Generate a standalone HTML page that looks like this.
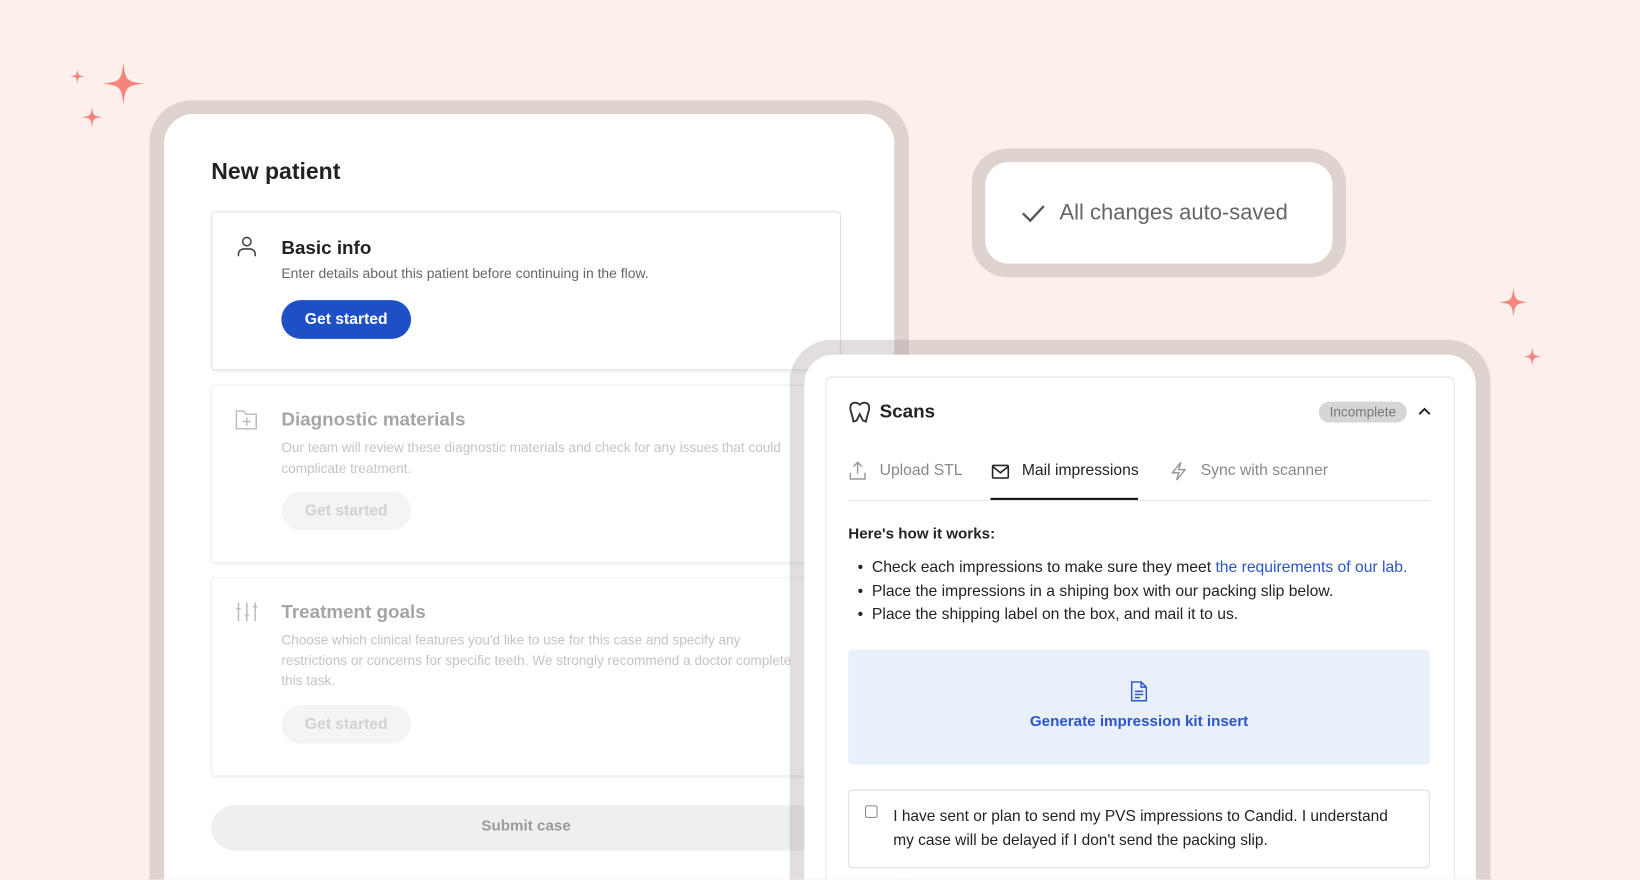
<!DOCTYPE html>
<html><head><meta charset="utf-8"><style>
*{box-sizing:border-box;margin:0;padding:0}
html,body{width:1640px;height:880px;overflow:hidden;background:#fdefec;font-family:"Liberation Sans",sans-serif}
#w{position:absolute;left:0;top:0;width:1640px;height:880px;overflow:hidden}
#s{position:absolute;left:0;top:0;width:1568px;height:841px;overflow:hidden;transform:scale(1.04592);transform-origin:0 0}
.a{position:absolute}
.frame{position:absolute;border-radius:40px 40px 0 0;background:rgba(156,146,143,0.3)}
.white{position:absolute;background:#fff}
.card{position:absolute;background:#fff;border:1px solid #e2e2e2;border-radius:4px;box-shadow:0 1px 3px rgba(0,0,0,.08)}
.t{position:absolute;white-space:nowrap}
.btn{position:absolute;border-radius:20px;font-weight:bold;font-size:15px;text-align:center;line-height:37px;width:124px;height:37px}
svg{position:absolute;overflow:visible}
</style></head><body><div id="w"><div id="s">
<svg width="0" height="0"><defs><path id="sp" d="M0,-1 C0.1,-0.15 0.15,-0.1 1,0 C0.15,0.1 0.1,0.15 0,1 C-0.1,0.15 -0.15,0.1 -1,0 C-0.15,-0.1 -0.1,-0.15 0,-1Z" fill="#f4857d"/></defs></svg>
<svg style="left:118px;top:80px"><use href="#sp" transform="scale(20)"/></svg>
<svg style="left:74px;top:73px"><use href="#sp" transform="scale(7)"/></svg>
<svg style="left:88px;top:112px"><use href="#sp" transform="scale(10)"/></svg>
<svg style="left:1447px;top:289px"><use href="#sp" transform="scale(14)"/></svg>
<svg style="left:1465px;top:341px"><use href="#sp" transform="scale(9)"/></svg>

<div class="frame" style="left:143px;top:96px;width:726px;height:745px"></div>
<div class="white" style="left:157px;top:109px;width:698px;height:732px;border-radius:28px 28px 0 0"></div>
<div class="t" style="left:202px;top:151px;font-size:22px;font-weight:bold;color:#222">New patient</div>

<div class="card" style="left:202px;top:202px;width:602px;height:152px"></div>
<svg style="left:227px;top:226px" width="18" height="20" viewBox="0 0 18 20" fill="none" stroke="#444" stroke-width="1.5"><circle cx="9" cy="5" r="4"/><path d="M1 19v-2a5 5 0 0 1 5-5h6a5 5 0 0 1 5 5v2"/></svg>
<div class="t" style="left:269px;top:227px;font-size:18px;font-weight:bold;color:#222">Basic info</div>
<div class="t" style="left:269px;top:254px;font-size:13.3px;color:#666">Enter details about this patient before continuing in the flow.</div>
<div class="btn" style="left:269px;top:287px;background:#1f4fc4;color:#fff">Get started</div>

<div class="card" style="left:202px;top:368px;width:600px;height:170px;border-color:#f3f3f3"></div>
<svg style="left:225px;top:391px" width="22" height="20" viewBox="0 0 22 20" fill="none" stroke="#bbb" stroke-width="1.4"><path d="M1 2h7l2 3h10v14H1z"/><path d="M11 8v8M7 12h8"/></svg>
<div class="t" style="left:269px;top:391px;font-size:18px;font-weight:bold;color:#a5a5a5">Diagnostic materials</div>
<div class="t" style="left:269px;top:418px;font-size:13px;color:#c4c4c4;line-height:20px">Our team will review these diagnostic materials and check for any issues that could<br>complicate treatment.</div>
<div class="btn" style="left:269px;top:470px;background:#f4f4f4;color:#d2d2d2">Get started</div>

<div class="card" style="left:202px;top:552px;width:600px;height:190px;border-color:#f3f3f3"></div>
<svg style="left:225px;top:575px" width="22" height="20" viewBox="0 0 22 20" fill="none" stroke="#bbb" stroke-width="1.4"><path d="M3 1v18M11 1v18M19 1v18M1 7h4M9 13h4M17 5h4"/></svg>
<div class="t" style="left:269px;top:575px;font-size:18px;font-weight:bold;color:#a5a5a5">Treatment goals</div>
<div class="t" style="left:269px;top:602px;font-size:13px;color:#c4c4c4;line-height:19.5px">Choose which clinical features you'd like to use for this case and specify any<br>restrictions or concerns for specific teeth. We strongly recommend a doctor complete<br>this task.</div>
<div class="btn" style="left:269px;top:674px;background:#f4f4f4;color:#d2d2d2">Get started</div>

<div class="a" style="left:202px;top:770px;width:600px;height:43px;border-radius:22px;background:#efefef"></div>
<div class="t" style="left:202px;top:782px;width:602px;text-align:center;font-size:14.5px;font-weight:bold;color:#9a9a9a">Submit case</div>

<div class="frame" style="left:929px;top:142px;width:358px;height:123px;border-radius:34px"></div>
<div class="white" style="left:942px;top:155px;width:332px;height:97px;border-radius:22px"></div>
<svg style="left:977px;top:195px" width="22" height="18" viewBox="0 0 22 18" fill="none" stroke="#555" stroke-width="2.2"><path d="M1 9l7 7L21 2"/></svg>
<div class="t" style="left:1013px;top:192px;font-size:21px;color:#666">All changes auto-saved</div>

<div class="frame" style="left:755px;top:325px;width:670px;height:516px"></div>
<div class="white" style="left:769px;top:339px;width:642px;height:502px;border-radius:28px 28px 0 0"></div>
<div class="card" style="left:789px;top:360px;width:602px;height:481px;box-shadow:none;border-radius:6px 6px 0 0;border-bottom:none"></div>
<svg style="left:811px;top:383px" width="22" height="22" viewBox="0 0 22 22" fill="none" stroke="#333" stroke-width="1.8"><path d="M11 4C8 1 2 1 2 7c0 4 2 6 3 13l3-1 3-6 3 6 3 1c1-7 3-9 3-13 0-6-6-6-9-3z"/></svg>
<div class="t" style="left:841px;top:383px;font-size:18px;font-weight:bold;color:#222">Scans</div>
<div class="a" style="left:1261px;top:384px;width:84px;height:20px;border-radius:10px;background:#d6d6d6;color:#777;font-size:13px;text-align:center;line-height:20px">Incomplete</div>
<svg style="left:1356px;top:389px" width="12" height="8" viewBox="0 0 12 8" fill="none" stroke="#222" stroke-width="1.8"><path d="M1 7l5-5 5 5"/></svg>

<svg style="left:812px;top:441px" width="16" height="18" viewBox="0 0 16 18" fill="none" stroke="#999" stroke-width="1.4"><path d="M8 12V1M4 5l4-4 4 4M1 11v6h14v-6"/></svg>
<div class="t" style="left:841px;top:441px;font-size:15px;color:#888">Upload STL</div>
<svg style="left:948px;top:444px" width="17" height="14" viewBox="0 0 17 14" fill="none" stroke="#222" stroke-width="1.5"><rect x="1" y="1" width="15" height="12" rx="1"/><path d="M1 2l7.5 6L16 2"/></svg>
<div class="t" style="left:977px;top:441px;font-size:15px;color:#222">Mail impressions</div>
<svg style="left:1119px;top:441px" width="16" height="19" viewBox="0 0 16 19" fill="none" stroke="#999" stroke-width="1.4"><path d="M10 1L2 11h6l-2 7 8-10H8z"/></svg>
<div class="t" style="left:1148px;top:441px;font-size:15px;color:#888">Sync with scanner</div>
<div class="a" style="left:811px;top:478px;width:556px;height:1px;background:#e6e6e6"></div>
<div class="a" style="left:947px;top:476px;width:141px;height:2px;background:#111"></div>

<div class="t" style="left:811px;top:503px;font-size:14.5px;font-weight:bold;color:#222">Here's how it works:</div>
<div class="t" style="left:820px;top:532px;font-size:15px;color:#222;line-height:22.5px">•&nbsp; Check each impressions to make sure they meet <span style="color:#2b55c9">the requirements of our lab.</span><br>•&nbsp; Place the impressions in a shiping box with our packing slip below.<br>•&nbsp; Place the shipping label on the box, and mail it to us.</div>

<div class="a" style="left:811px;top:621px;width:556px;height:110px;background:#e8f0fb;border-radius:4px"></div>
<svg style="left:1081px;top:651px" width="16" height="20" viewBox="0 0 16 20" fill="none" stroke="#2b55c9" stroke-width="1.4"><path d="M1 1h9l5 5v13H1z M10 1v5h5 M4 10h8M4 13h8M4 16h5"/></svg>
<div class="t" style="left:811px;top:682px;width:556px;text-align:center;font-size:14.5px;font-weight:bold;color:#2b55c9">Generate impression kit insert</div>

<div class="a" style="left:811px;top:755px;width:556px;height:75px;border:1px solid #ddd;border-radius:4px"></div>
<div class="a" style="left:827px;top:770px;width:12px;height:12px;border:1px solid #888;border-radius:2px"></div>
<div class="t" style="left:854px;top:770px;font-size:14.8px;color:#222;line-height:22.5px">I have sent or plan to send my PVS impressions to Candid. I understand<br>my case will be delayed if I don't send the packing slip.</div>
</div></div></body></html>
